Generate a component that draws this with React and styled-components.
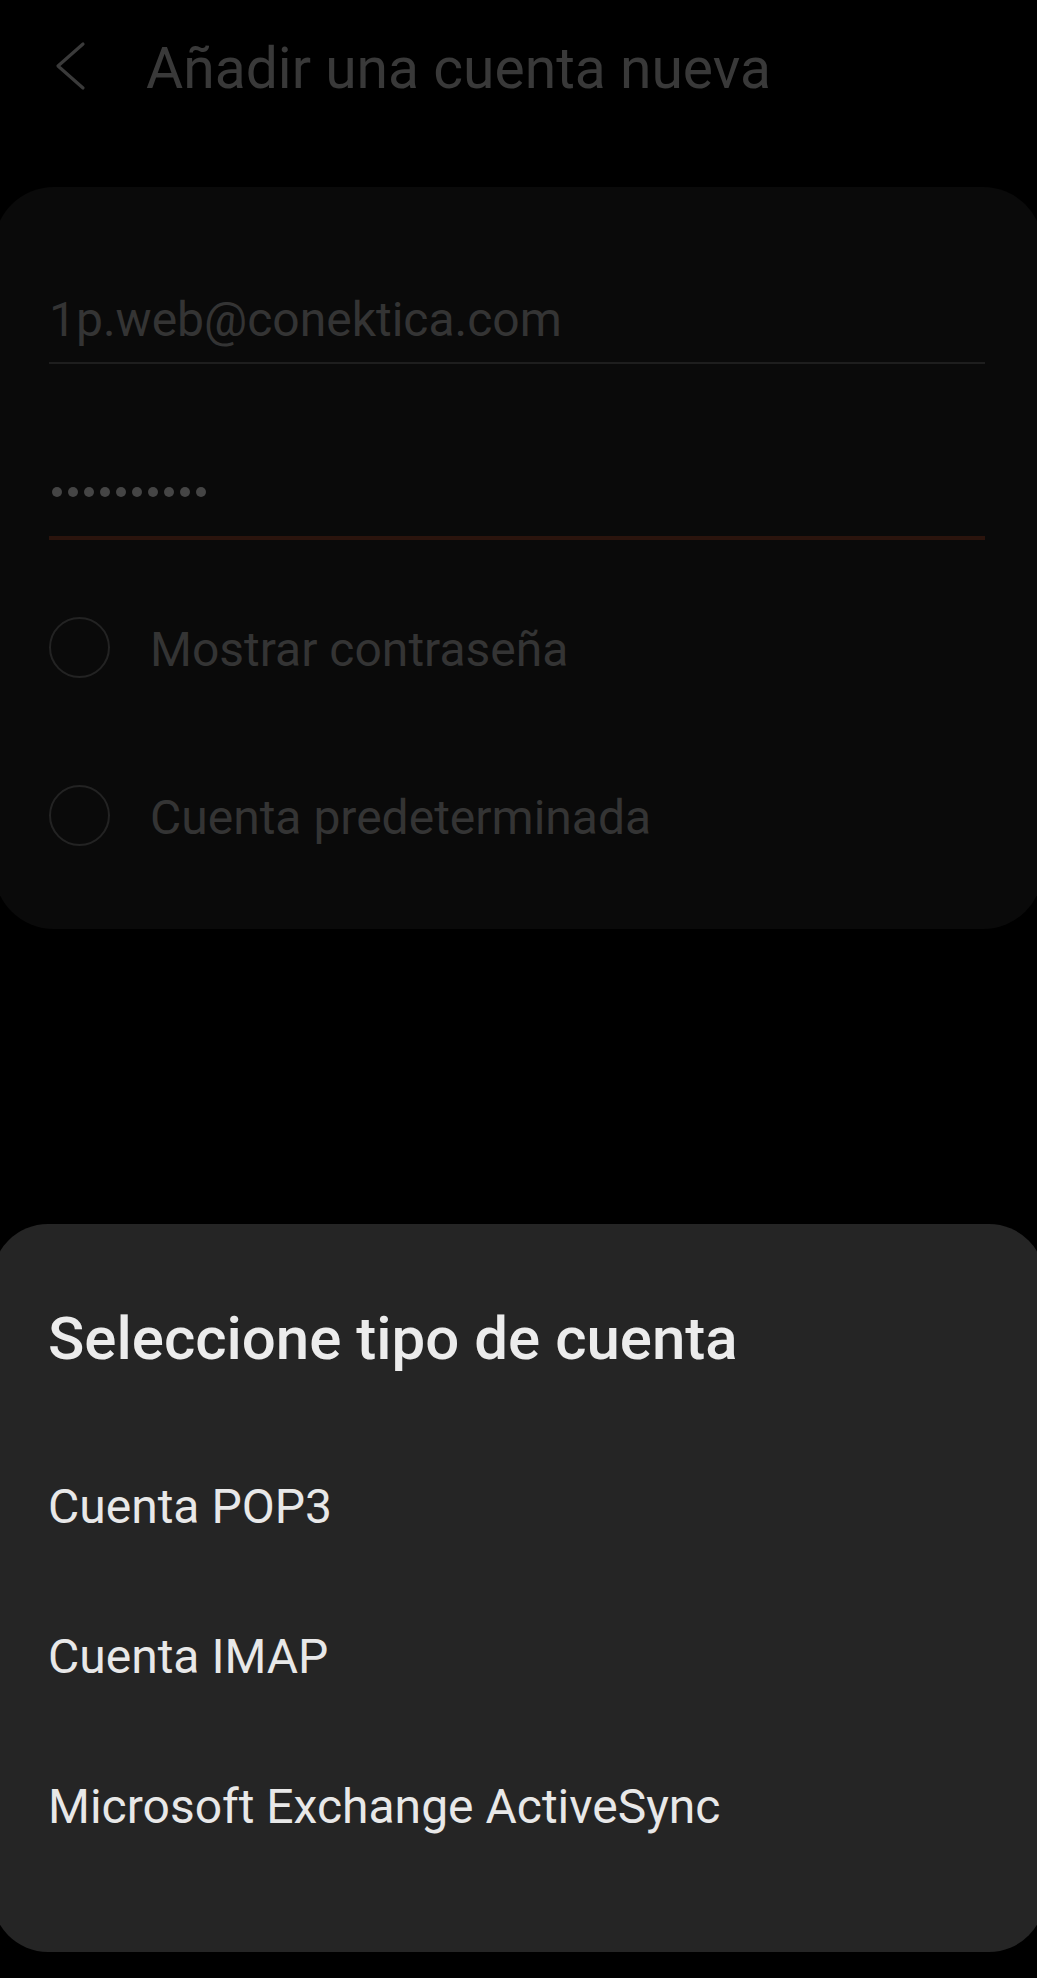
import styled, {createGlobalStyle} from "styled-components";

const GlobalStyle = createGlobalStyle`
  html, body {
    margin: 0;
    padding: 0;
    background: #000;
  }
  body {
    font-family: Roboto, "Noto Sans", "Liberation Sans", sans-serif;
    overflow: hidden;
  }
  * {
    box-sizing: border-box;
  }
`;

// page behind the sheet (already dimmed by the scrim)
const Screen = styled.div`
  position: relative;
  width: 1037px;
  height: 1978px;
  background: #000;
  overflow: hidden;
`;

const Header = styled.header`
  display: flex;
  align-items: flex-start;
  gap: 56px;
  height: 187px;
  padding: 41px 0 0 50px;
`;

const BackButton = styled.button`
  display: flex;
  padding: 0;
  border: 0;
  background: none;
  color: #3a3a3a;
`;

const Title = styled.h1`
  margin: 0;
  font-size: 57px;
  line-height: 56px;
  font-weight: 400;
  color: #393939;
`;

const Card = styled.section`
  display: flex;
  flex-direction: column;
  margin: 0 -6px;
  padding: 105px 58px 83px 55px;
  background: #0a0a0a;
  border-radius: 60px;
`;

const Field = styled.div`
  display: flex;
  align-items: center;
  padding: ${p => p.$top || 0}px 0 ${p => p.$bottom}px;
  border-bottom: ${p => p.$focused ? "4px solid #2b140d" : "2px solid #1e1e1e"};
  font-size: 48px;
  line-height: 56px;
  color: #343434;
`;

const Dots = styled.div`
  display: flex;
  gap: 6px;
  margin-left: 3px;
`;

const Dot = styled.span`
  width: 10px;
  height: 10px;
  border-radius: 50%;
  background: #454545;
`;

const CheckRow = styled.label`
  display: flex;
  align-items: flex-start;
  gap: 40px;
  margin-top: ${p => p.$gap}px;
`;

const Circle = styled.span`
  flex: none;
  width: 61px;
  height: 61px;
  border: 2px solid #232323;
  border-radius: 50%;
`;

const CheckLabel = styled.span`
  padding-top: 5px;
  font-size: 48px;
  line-height: 56px;
  color: #343434;
`;

// bottom sheet dialog
const Overlay = styled.div`
  position: absolute;
  inset: 0;
  display: flex;
  flex-direction: column;
  justify-content: flex-end;
  padding-bottom: 26px;
`;

const Sheet = styled.div`
  display: flex;
  flex-direction: column;
  margin: 0 -8px;
  padding: 81px 56px 70px;
  background: #252525;
  border-radius: 56px;
`;

const SheetTitle = styled.h2`
  margin: 0 0 59px;
  font-size: 60px;
  line-height: 68px;
  font-weight: 500;
  color: #ececec;
`;

const Option = styled.div`
  font-size: 48px;
  line-height: 150px;
  height: 150px;
  color: #e8e8e8;
`;

const accountTypes = ["Cuenta POP3", "Cuenta IMAP", "Microsoft Exchange ActiveSync"];

const App = () => {
  return (
    <Screen>
      <GlobalStyle />
      <Header>
        <BackButton aria-label="Atrás">
          <svg width="40" height="56" viewBox="0 0 40 56" fill="none">
            <path d="M33 3 L8 25 L33 47" stroke="currentColor" strokeWidth="3.2" strokeLinecap="round" strokeLinejoin="round" />
          </svg>
        </BackButton>
        <Title>Añadir una cuenta nueva</Title>
      </Header>

      <Card>
        <Field $bottom={14}>1p.web@conektica.com</Field>
        <Field $top={123} $bottom={39} $focused>
          <Dots>
            {Array.from({length: 10}).map((_, i) => <Dot key={i} />)}
          </Dots>
        </Field>
        <CheckRow $gap={77}>
          <Circle />
          <CheckLabel>Mostrar contraseña</CheckLabel>
        </CheckRow>
        <CheckRow $gap={107}>
          <Circle />
          <CheckLabel>Cuenta predeterminada</CheckLabel>
        </CheckRow>
      </Card>

      <Overlay>
        <Sheet>
          <SheetTitle>Seleccione tipo de cuenta</SheetTitle>
          {accountTypes.map(type => <Option key={type}>{type}</Option>)}
        </Sheet>
      </Overlay>
    </Screen>
  );
};

export default App;
